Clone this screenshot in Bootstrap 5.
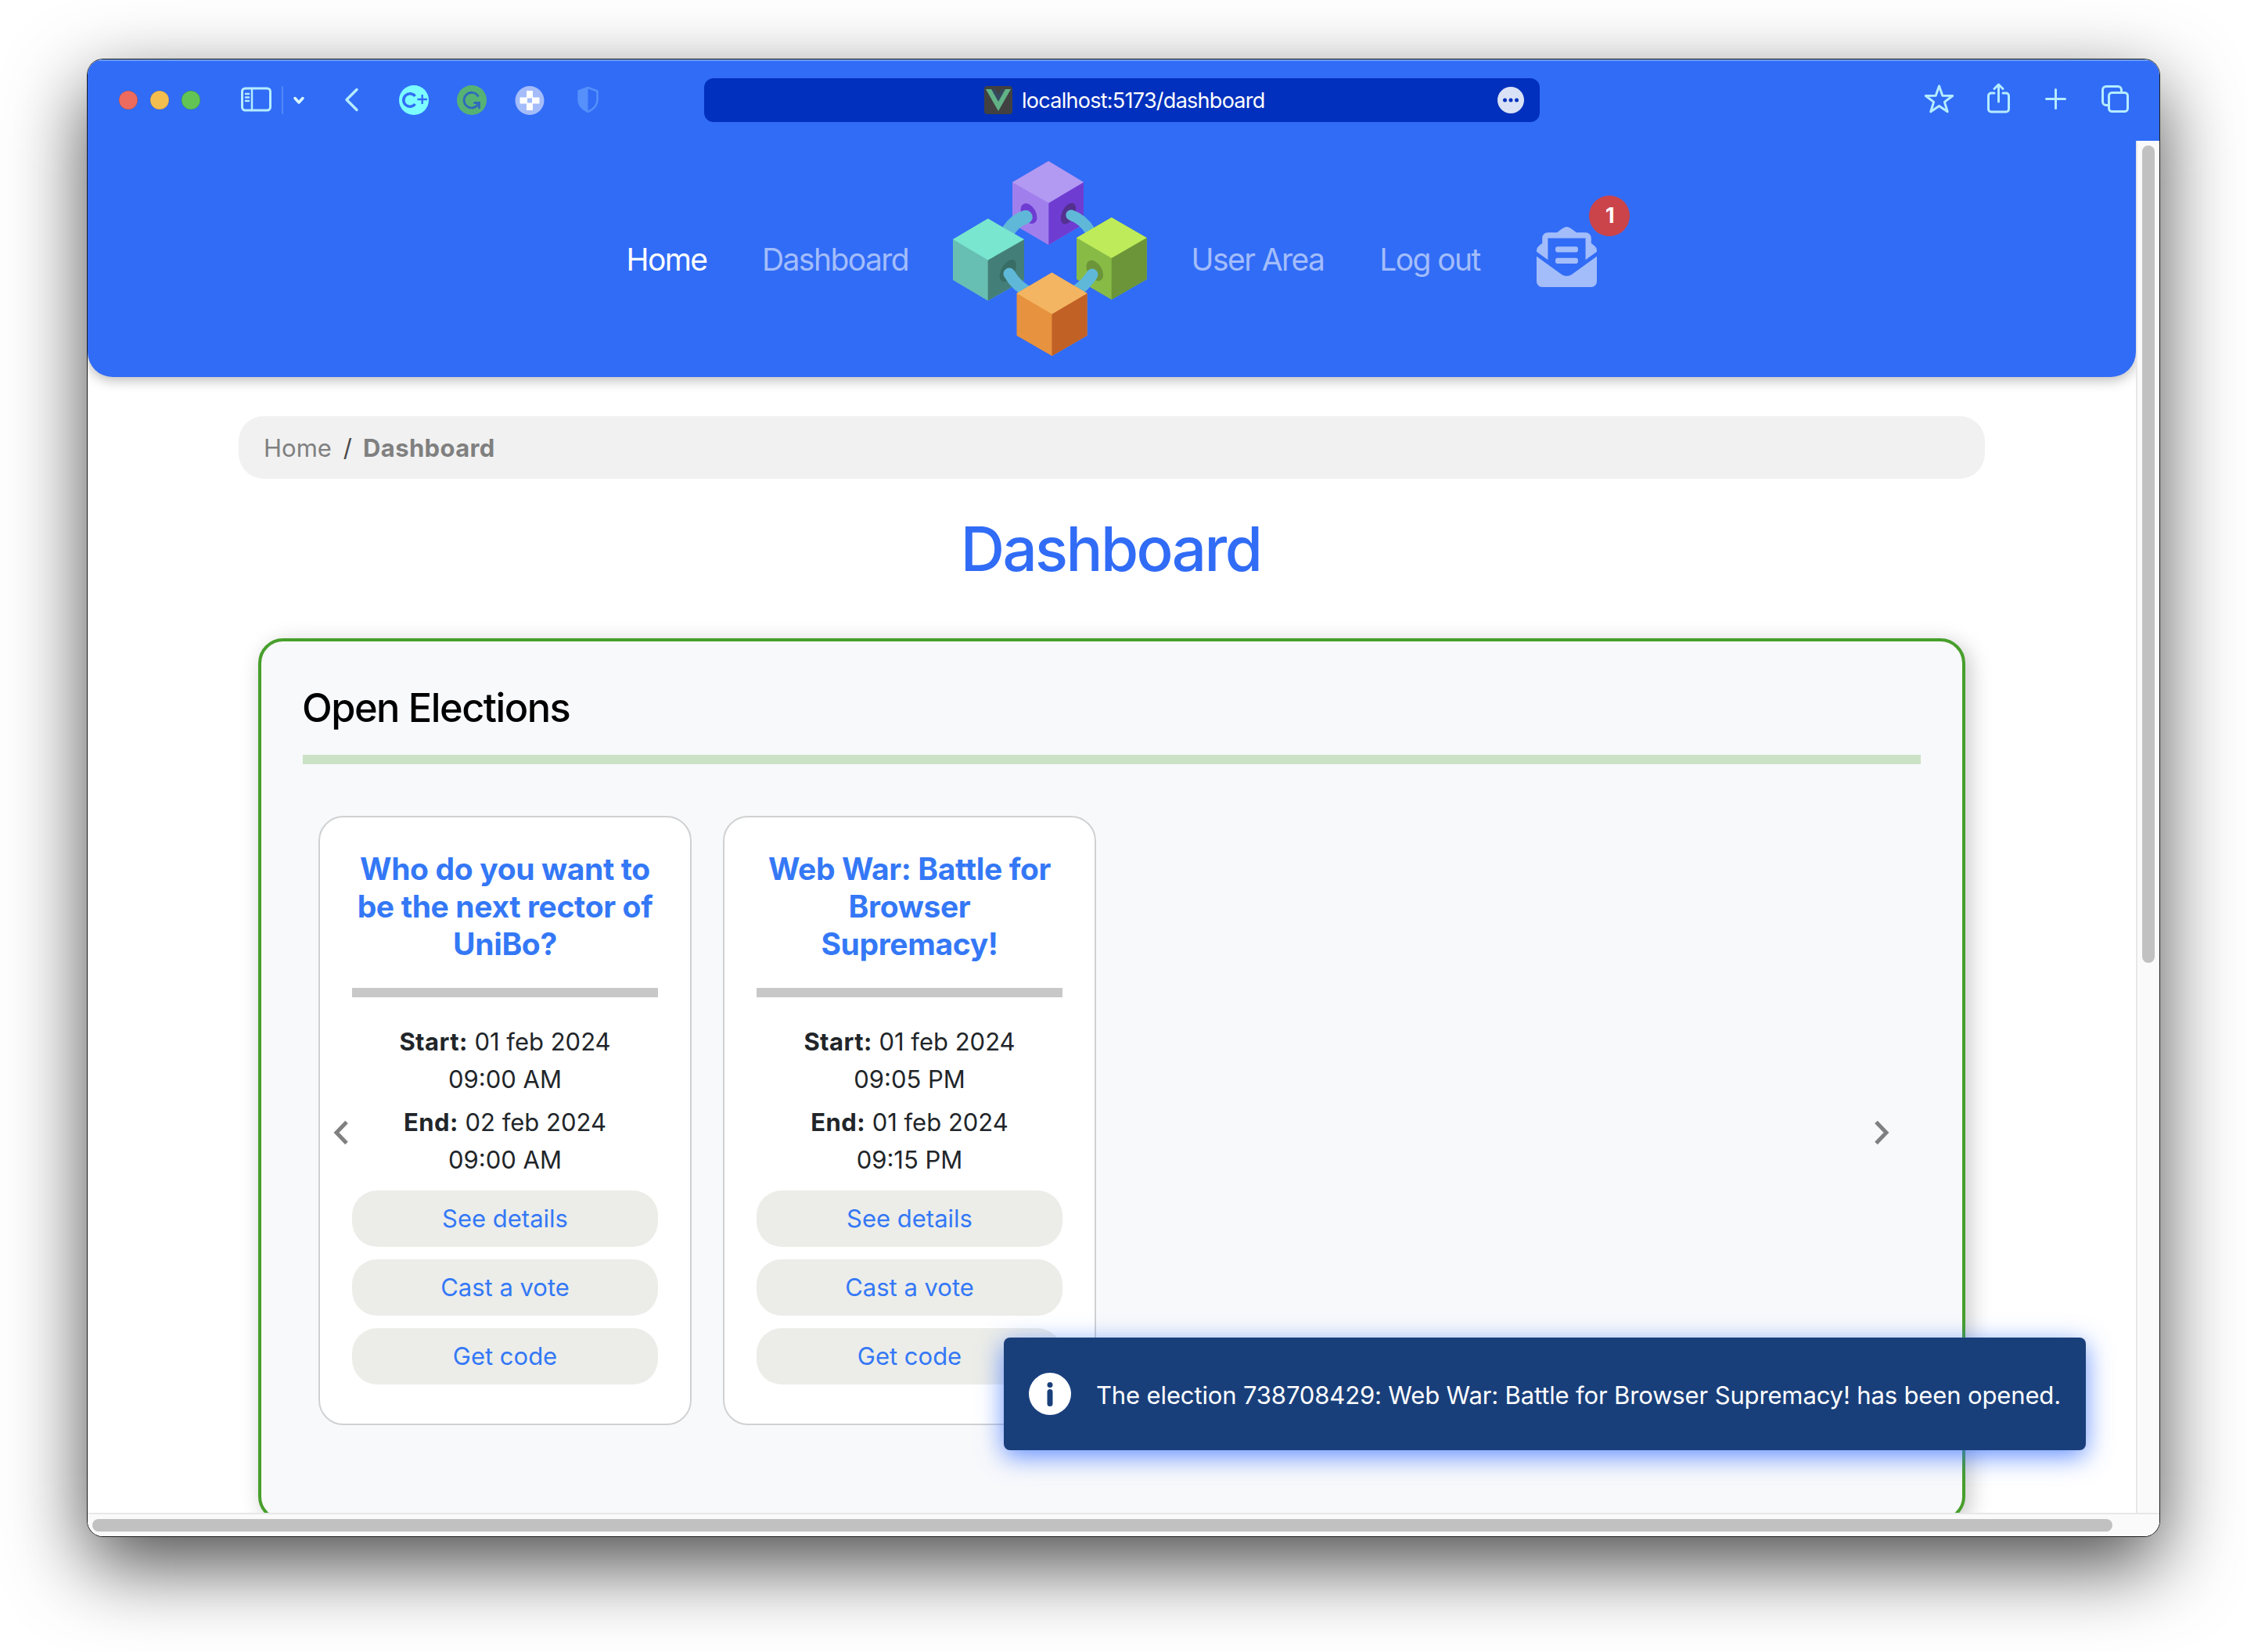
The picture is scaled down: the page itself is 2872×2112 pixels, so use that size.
<!DOCTYPE html>
<html lang="en">
<head>
<meta charset="utf-8">
<meta name="viewport" content="width=device-width, initial-scale=1">
<title>Dashboard</title>
<link href="https://cdn.jsdelivr.net/npm/bootstrap@5.3.0/dist/css/bootstrap.min.css" rel="stylesheet">
<style>
body{font-family:Inter,"Liberation Sans",sans-serif;font-size:31px;line-height:48px;background:#fff;color:#212529;overflow:hidden}
.desk{width:2872px;height:2112px;padding:76px 112px 148px}
.win{height:1888px;border-radius:20px;overflow:hidden;background:#fff}
.win-shadow{border-radius:20px;box-shadow:0 0 0 1px #1c1c1c,0 36px 100px rgba(0,0,0,.71)}
.topbar{height:104px;background:#316cf6;color:#b5ecff;box-shadow:inset 0 2px 0 #6a9af9}
.topbar svg,.site svg{display:block;flex:none}
.url{width:1068px;height:56px;border-radius:12px;background:#0030bd;color:#fff;font-size:27px;line-height:56px;letter-spacing:-.027em;margin-left:135px}
.url span{padding-top:2px}
.lefticons{width:653px;height:104px}
.site{width:2618px;height:1754px;overflow:hidden;position:relative}
.hero{height:302px;background:#316cf6;border-radius:0 0 32px 32px;box-shadow:0 4px 16px rgba(0,0,0,.28);padding-left:668px;font-size:39px;letter-spacing:-.04em}
.hero a{color:#a3bdfb;text-decoration:none;text-align:center;white-space:nowrap;padding-top:1px}
.hero a.on{color:#fff}
.w1{width:144px}.w2{width:287px}.w3{width:260px;margin:-6px 3px 0 -3px}.w4{width:273px}.w5{width:167px}.w6{width:182px;margin-top:-6px}
.notif{position:absolute;left:120px;top:-40px;width:52px;height:52px;border-radius:50%;background:#cb444a;color:#fff;font-size:27px;font-weight:700;line-height:52px;text-align:center}
.crumbs{height:80px;margin:50px 193px 0;border-radius:32px;background:#f1f1f1;padding:1px 0 0 32px;color:#808080}
.crumbs b{letter-spacing:.012em}
.slash{color:#4a4a4a;margin:0 14px 0 15px}
.title{font-size:78px;font-weight:500;color:#316cf6;line-height:96px;letter-spacing:-.033em;margin:42px 3px 0 0}
.panel{width:2182px;height:1129px;margin:66px 0 0 218px;border:4px solid #479f2b;border-radius:32px;background:#f8f9fb;box-shadow:6px 6px 28px rgba(0,0,0,.22);padding:54px 53px 0;position:relative}
.panel h2{font-size:50.5px;font-weight:500;color:#000;line-height:62px;letter-spacing:-.03em;margin:0 0 0 -1px}
.rule{height:12px;background:#cbe2c7;margin-top:29px}
.deck{margin:66px 0 0 20px;gap:40px}
.vote{width:477px;height:779px;border:2px solid #d0d1d2;border-radius:32px;background:#fff;padding:42px 41px 0;text-align:center}
.vote h5{font-size:39px;font-weight:700;color:#3478f6;line-height:48px;letter-spacing:-.009em;margin:0;white-space:nowrap}
.vote hr{height:12px;background:#c8c8c8;border:0;opacity:1;margin:32px 0 33px}
.vote p{margin:0 0 7px;white-space:nowrap}
.vote p b{letter-spacing:.014em}
.pill{display:block;height:72px;line-height:72px;border-radius:32px;background:#ecede8;color:#3478f6;text-decoration:none;margin-bottom:16px}
.vote p+.pill{margin-top:15px}
.arrow{position:absolute;top:612px}
.arrow-prev{left:92px}
.arrow-next{left:2061px}
.toastbox{position:absolute;left:1171px;top:1530px;width:1383px;height:144px;border-radius:8px;background:#193f7b;color:#fff;padding-left:32px;letter-spacing:-.0045em;box-shadow:0 8px 32px rgba(49,108,255,.75);white-space:nowrap}
.vbar{width:30px;background:#fafafa;border-left:2px solid #e6e7e9;padding:6px 6px 0}
.vbar div{width:16px;height:1045px;border-radius:8px;background:#c1c1c1}
.hbar{height:30px;background:#fafafa;border-top:2px solid #e6e7e9;padding:6px}
.hbar div{width:2582px;height:16px;border-radius:8px;background:#c1c1c1}
</style>
<script src="https://cdn.jsdelivr.net/npm/bootstrap@5.3.0/dist/js/bootstrap.bundle.min.js"></script>
</head>
<body>
<div class="desk"><div class="win-shadow"><div class="win d-flex flex-column">
<div class="topbar d-flex align-items-center">
<div class="lefticons d-flex align-items-center">
<svg width="653" height="104" viewBox="112 76 653 104" fill="none" stroke="#b5ecff" stroke-width="3" stroke-linecap="round" stroke-linejoin="round">
<g stroke="#0002" stroke-width="1"><circle cx="164" cy="128" r="12" fill="#ec6b5e"/><circle cx="204" cy="128" r="12" fill="#f4be4f"/><circle cx="244" cy="128" r="12" fill="#61c454"/></g>
<rect x="309.500" y="113" width="36" height="28" rx="4"/><path d="M322 113v28M314 120h4M314 124.500h4M314 129h4" stroke-width="2.500"/>
<path d="M361 111v34" stroke="#5288f8" stroke-width="2"/><path d="M377 125.500l5 5.500 5-5.500" stroke="#d9f6ff" stroke-width="3.500"/>
<path d="M456 114.500l-13 13 13 13" stroke-width="3.500"/>
<g stroke="none"><circle cx="529" cy="128" r="19" fill="#7cfcff"/><circle cx="603" cy="128" r="19" fill="#56b274"/><circle cx="677" cy="128.500" r="18.500" fill="#a4bcfa"/>
<path d="M673 116h8v8.500h8.500v8H681v8.500h-8v-8.500h-8.500v-8h8.500z" fill="#fff"/><rect x="674" y="125.500" width="6" height="6" fill="#a4bcfa"/></g>
<path d="M530.500 123a8.200 8.200 0 1 0 0 10" stroke="#316cf6" stroke-width="3.600" stroke-linecap="butt"/><path d="M533.500 127h12.500M539.700 121v12" stroke="#316cf6" stroke-width="2.400" stroke-linecap="butt"/>
<path d="M611.500 123.500a9.800 9.800 0 1 0-.5 10" stroke="#2f69bd" stroke-width="2.800" stroke-linecap="butt"/><path d="M605.500 131.500h7v7.500" stroke="#2f69bd" stroke-width="2.800" stroke-linecap="butt" stroke-linejoin="miter"/>
<path d="M751.500 112l12 4.500V128c0 8-6 12-12 15-6-3-12-7-12-15V116.500z" stroke="#5590fb" stroke-width="2.500"/><path d="M751.500 112l-12 4.500V128c0 8 6 12 12 15z" fill="#5590fb" stroke="none"/>
</svg></div>
<div class="url d-flex align-items-center">
<svg width="406" height="56" viewBox="900 100 406 56"><rect x="1258" y="110" width="36" height="36" rx="4" fill="#414141"/><path d="M1260 114h32l-16 28z" fill="#62b287"/><path d="M1267 114h18l-9 16z" fill="#35495e"/><path d="M1272 114h8l-4 7z" fill="#414141"/></svg>
<span>localhost:5173/dashboard</span>
<svg class="ms-auto" width="54" height="56" viewBox="0 0 54 56"><circle cx="17" cy="28" r="17" fill="#d8e1f6"/><g fill="#0030bd"><circle cx="9.500" cy="28" r="2.500"/><circle cx="17" cy="28" r="2.500"/><circle cx="24.500" cy="28" r="2.500"/></g></svg>
</div>
<svg class="ms-auto" width="320" height="104" viewBox="2440 76 320 104" fill="none" stroke="#b5ecff" stroke-width="3" stroke-linecap="round" stroke-linejoin="round">
<path d="M2478.500 110l4.300 12.200 12.900.3-10.300 7.900 3.800 12.400-10.700-7.400-10.700 7.400 3.800-12.400-10.300-7.900 12.900-.3z"/>
<path d="M2549 119h-4a3.500 3.500 0 0 0-3.500 3.500v17a3.500 3.500 0 0 0 3.500 3.500h19a3.500 3.500 0 0 0 3.500-3.500v-17a3.500 3.500 0 0 0-3.500-3.500h-4M2554.500 130v-21M2549 113.500l5.500-5.500 5.500 5.500"/>
<path d="M2615.500 126.500h24M2627.500 114.500v24"/>
<rect x="2695.500" y="118.500" width="24" height="24" rx="4"/><path d="M2695 134.500h-3a4.500 4.500 0 0 1-4.500-4.500v-15a4.500 4.500 0 0 1 4.500-4.500h15a4.500 4.500 0 0 1 4.500 4.500v3"/>
</svg>
</div>
<div class="d-flex">
<main class="site">
<nav class="hero d-flex align-items-center">
<a class="w1 on" href="#">Home</a><a class="w2" href="#">Dashboard</a>
<div class="w3"><svg class="mx-auto" width="260" height="260" viewBox="18 8 260 260">
<path d="M104 43l46-27 45 27v53.500l-45 26.500-46-27z" fill="#a07fec"/><path d="M150.300 69.500l44.700-27v54l-44.700 26.500z" fill="#6f3cd2"/><path d="M104 43l46.300-27 44.700 27-44.700 26.500z" fill="#b299f2"/>
<ellipse cx="125" cy="83" rx="9" ry="14" transform="rotate(-30 125 83)" fill="#6f3cd2"/><ellipse cx="175.500" cy="83" rx="8" ry="14.500" transform="rotate(27 175.500 83)" fill="#54308f"/>
<g fill="none" stroke="#60b8d8" stroke-linecap="round"><path d="M121 87.500Q108 91 98 106" stroke-width="17.500"/><path d="M179 85Q194 90 204 106" stroke-width="13.500"/></g>
<path d="M28 116l44.700-26.500 46.300 27v51.500L72.700 194.500 28 168z" fill="#67beb2"/><path d="M72.700 142.500l46.300-26.500v52l-46.300 26.500z" fill="#437f78"/><path d="M28 116l44.700-26.500L119 116l-46.300 26.500z" fill="#79e6cf"/>
<ellipse cx="98.300" cy="156" rx="8.500" ry="15.500" transform="rotate(30 98.300 156)" fill="#386d65"/>
<path d="M186 114l44.700-26 45 26v53l-45 26-44.700-26z" fill="#88bb46"/><path d="M230.700 139.500l45-26v53.500l-45 26z" fill="#6b9538"/><path d="M186 114l44.700-26 45 26-45 26z" fill="#bdeb59"/>
<ellipse cx="209.300" cy="156" rx="9" ry="14.500" transform="rotate(-32 209.300 156)" fill="#6b9538"/>
<g fill="none" stroke="#60b8d8" stroke-linecap="round" stroke-width="15"><path d="M100 160Q110 177 126 184"/><path d="M206 161Q196 177 180 185"/></g>
<path d="M109.500 185l45-26.500 45 26.500v54l-45 26-45-26z" fill="#e7923e"/><path d="M154.500 211.500l45-26.500v54l-45 26z" fill="#c16126"/><path d="M109.500 185l45-26.500 45 26.500-45 26.500z" fill="#f3b562"/>
</svg></div>
<a class="w4" href="#">User Area</a><a class="w5" href="#">Log out</a>
<div class="w6 position-relative"><svg class="mx-auto" width="77" height="77" viewBox="0 0 512 512" fill="#a3bdfb"><path d="M176 216h160c8.840 0 16-7.160 16-16v-16c0-8.840-7.160-16-16-16H176c-8.840 0-16 7.160-16 16v16c0 8.840 7.160 16 16 16zm-16 80c0 8.840 7.160 16 16 16h160c8.840 0 16-7.160 16-16v-16c0-8.840-7.160-16-16-16H176c-8.840 0-16 7.160-16 16v16zm96 121.130c-16.420 0-32.840-5.060-46.860-15.190L0 250.860V464c0 26.510 21.490 48 48 48h416c26.510 0 48-21.490 48-48V250.860L302.860 401.940c-14.020 10.120-30.440 15.190-46.860 15.190zm237.610-254.180c-8.850-6.940-17.240-13.470-29.610-22.810V96c0-26.510-21.490-48-48-48h-77.550c-3.040-2.200-5.870-4.260-9.040-6.560C312.600 29.170 279.200-.35 256 0c-23.200-.35-56.590 29.170-73.410 41.440-3.170 2.300-6 4.360-9.040 6.560H96c-26.510 0-48 21.490-48 48v44.140c-12.370 9.330-20.760 15.870-29.610 22.810A47.995 47.995 0 0 0 0 200.720v10.650l96 69.350V96h320v184.720l96-69.350v-10.650c0-14.740-6.780-28.670-18.390-37.770z"/></svg><span class="notif">1</span></div>
</nav>
<div class="crumbs d-flex align-items-center"><span>Home</span><span class="slash">/</span><b>Dashboard</b></div>
<h1 class="title text-center">Dashboard</h1>
<section class="panel">
<h2>Open Elections</h2>
<div class="rule"></div>
<div class="deck d-flex">
<article class="vote"><h5>Who do you want to<br>be the next rector of<br>UniBo?</h5><hr>
<p><b>Start:</b> 01 feb 2024<br>09:00 AM</p><p><b>End:</b> 02 feb 2024<br>09:00 AM</p>
<a class="pill" href="#">See details</a><a class="pill" href="#">Cast a vote</a><a class="pill" href="#">Get code</a></article>
<article class="vote"><h5>Web War: Battle for<br>Browser<br>Supremacy!</h5><hr>
<p><b>Start:</b> 01 feb 2024<br>09:05 PM</p><p><b>End:</b> 01 feb 2024<br>09:15 PM</p>
<a class="pill" href="#">See details</a><a class="pill" href="#">Cast a vote</a><a class="pill" href="#">Get code</a></article>
</div>
<svg class="arrow arrow-prev" width="20" height="32" viewBox="0 0 20 32" fill="none" stroke="#808080" stroke-width="5"><path d="M17 2.500L4 16l13 13.500"/></svg>
<svg class="arrow arrow-next" width="20" height="32" viewBox="0 0 20 32" fill="none" stroke="#808080" stroke-width="5"><path d="M3 2.500L16 16 3 29.500"/></svg>
</section>
<div class="toastbox d-flex align-items-center"><svg width="54" height="54" viewBox="0 0 54 54"><circle cx="27" cy="27" r="27" fill="#fff"/><circle cx="27" cy="15.500" r="3.500" fill="#193f7b"/><path d="M27 24.500v15" stroke="#193f7b" stroke-width="7" stroke-linecap="round"/></svg><span class="ms-3 ps-3 pt-1">The election 738708429: Web War: Battle for Browser Supremacy! has been opened.</span></div>
</main>
<div class="vbar"><div></div></div>
</div>
<div class="hbar"><div></div></div>
</div></div></div>
</body>
</html>
